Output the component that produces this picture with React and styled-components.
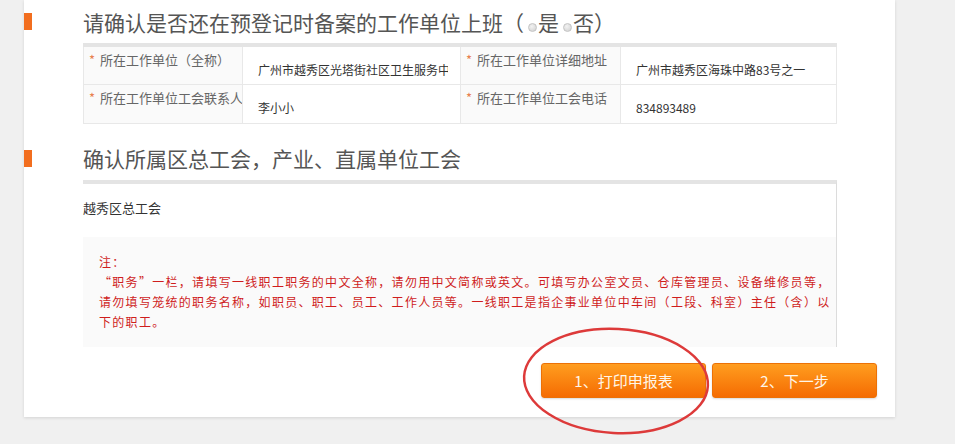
import React from 'react';
import styled, { createGlobalStyle } from 'styled-components';

const GlobalStyle = createGlobalStyle`
  html, body {
    margin: 0;
    padding: 0;
    background: #f0f0f0;
    font-family: "Noto Sans CJK SC", "Noto Sans", sans-serif;
  }
`;

const Page = styled.div`
  width: 955px;
  height: 444px;
  overflow: hidden;
  background: #f0f0f0;
`;

const Panel = styled.div`
  position: relative;
  margin-left: 24px;
  width: 871px;
  height: 417px;
  background: #fff;
  box-shadow: 0 1px 3px rgba(0, 0, 0, 0.12);
  display: flex;
  flex-direction: column;
`;

const SectionHeader = styled.div`
  display: flex;
  align-items: center;
  height: ${(p) => p.$height}px;
  margin-top: ${(p) => p.$top || 0}px;
`;

const Marker = styled.span`
  width: 8px;
  height: 17px;
  background: #f26e1f;
  flex-shrink: 0;
`;

const Title = styled.h2`
  margin: 0 0 0 51px;
  font-size: 21px;
  font-weight: 400;
  line-height: 26px;
  color: #555;
  white-space: nowrap;
`;

const Radio = styled.span`
  display: inline-block;
  width: 7px;
  height: 7px;
  margin: 0 1px 0 4px;
  border-radius: 50%;
  border: 1px solid #c4c4c4;
  background: radial-gradient(circle at 40% 35%, #f2f2f2, #cfcfcf);
  vertical-align: -1px;
`;

const Table = styled.div`
  margin-left: 59px;
  width: 754px;
  border-top: 4px solid #e4e4e4;
  display: grid;
  grid-template-columns: 159px 218px 160px 217px;
  grid-template-rows: 38px 39px;
`;

const LabelCell = styled.div`
  background: #fafafa;
  border-left: 1px solid #e8e8e8;
  border-bottom: 1px solid #e8e8e8;
  padding: 5px 0 0 5px;
  font-size: 13px;
  line-height: 16px;
  color: #666;
  white-space: nowrap;
`;

const Star = styled.span`
  color: #e8804f;
  margin-right: 5px;
`;

const ValueCell = styled.div`
  background: #fff;
  border-left: 1px solid #e8e8e8;
  border-bottom: 1px solid #e8e8e8;
  border-right: ${(p) => (p.$last ? '1px solid #e8e8e8' : 'none')};
  padding: 15px 0 0 15px;
`;

const Field = styled.div`
  width: 190px;
  font-size: 12px;
  line-height: 16px;
  color: #333;
  white-space: nowrap;
  overflow: hidden;
`;

const UnionBox = styled.div`
  margin-left: 59px;
  width: 753px;
  border-top: 4px solid #e4e4e4;
  border-right: 1px solid #dcdcdc;
`;

const UnionName = styled.div`
  padding-top: 16px;
  font-size: 13px;
  line-height: 16px;
  color: #333;
`;

const Note = styled.div`
  margin-top: 21px;
  background: #fafafa;
  padding: 15px 0 15px 16px;
  height: 80px;
  overflow: hidden;
  color: #cf1d1d;
  font-size: 12px;
  line-height: 20px;
  letter-spacing: 1.3px;
`;

const NoteLine = styled.div`
  white-space: nowrap;
`;

const Actions = styled.div`
  display: flex;
  justify-content: flex-end;
  gap: 6px;
  margin-top: 16px;
  padding-right: 18px;
`;

const OrangeButton = styled.button`
  width: 165px;
  height: 35px;
  border: 1px solid #ec7106;
  border-radius: 3px;
  background: linear-gradient(#ff9d1f, #f56c02);
  color: #fff6e8;
  font-family: inherit;
  font-size: 15px;
  line-height: 20px;
  box-shadow: 0 1px 2px rgba(0, 0, 0, 0.15);
  cursor: pointer;
`;

const Circle = styled.svg`
  position: absolute;
  left: 494px;
  top: 326px;
  overflow: visible;
  pointer-events: none;
`;

export default function App() {
  return (
    <Page>
      <GlobalStyle />
      <Panel>
        <SectionHeader $height={43}>
          <Marker />
          <Title>
            请确认是否还在预登记时备案的工作单位上班（<Radio />是<Radio />否）
          </Title>
        </SectionHeader>
        <Table>
          <LabelCell><Star>*</Star>所在工作单位（全称）</LabelCell>
          <ValueCell><Field>广州市越秀区光塔街社区卫生服务中心</Field></ValueCell>
          <LabelCell><Star>*</Star>所在工作单位详细地址</LabelCell>
          <ValueCell $last><Field>广州市越秀区海珠中路83号之一</Field></ValueCell>
          <LabelCell><Star>*</Star>所在工作单位工会联系人</LabelCell>
          <ValueCell><Field>李小小</Field></ValueCell>
          <LabelCell><Star>*</Star>所在工作单位工会电话</LabelCell>
          <ValueCell $last><Field>834893489</Field></ValueCell>
        </Table>

        <SectionHeader $height={44} $top={12}>
          <Marker />
          <Title>确认所属区总工会，产业、直属单位工会</Title>
        </SectionHeader>
        <UnionBox>
          <UnionName>越秀区总工会</UnionName>
          <Note>
            <NoteLine>注：</NoteLine>
            <NoteLine>“职务”一栏，请填写一线职工职务的中文全称，请勿用中文简称或英文。可填写办公室文员、仓库管理员、设备维修员等，</NoteLine>
            <NoteLine>请勿填写笼统的职务名称，如职员、职工、员工、工作人员等。一线职工是指企事业单位中车间（工段、科室）主任（含）以</NoteLine>
            <NoteLine>下的职工。</NoteLine>
          </Note>
        </UnionBox>

        <Actions>
          <OrangeButton>1、打印申报表</OrangeButton>
          <OrangeButton>2、下一步</OrangeButton>
        </Actions>

        <Circle width="196" height="110" viewBox="0 0 196 110">
          <ellipse
            cx="98"
            cy="55"
            rx="92"
            ry="52"
            fill="none"
            stroke="#dd3a3a"
            strokeWidth="2.5"
            transform="rotate(3 98 55)"
          />
        </Circle>
      </Panel>
    </Page>
  );
}
